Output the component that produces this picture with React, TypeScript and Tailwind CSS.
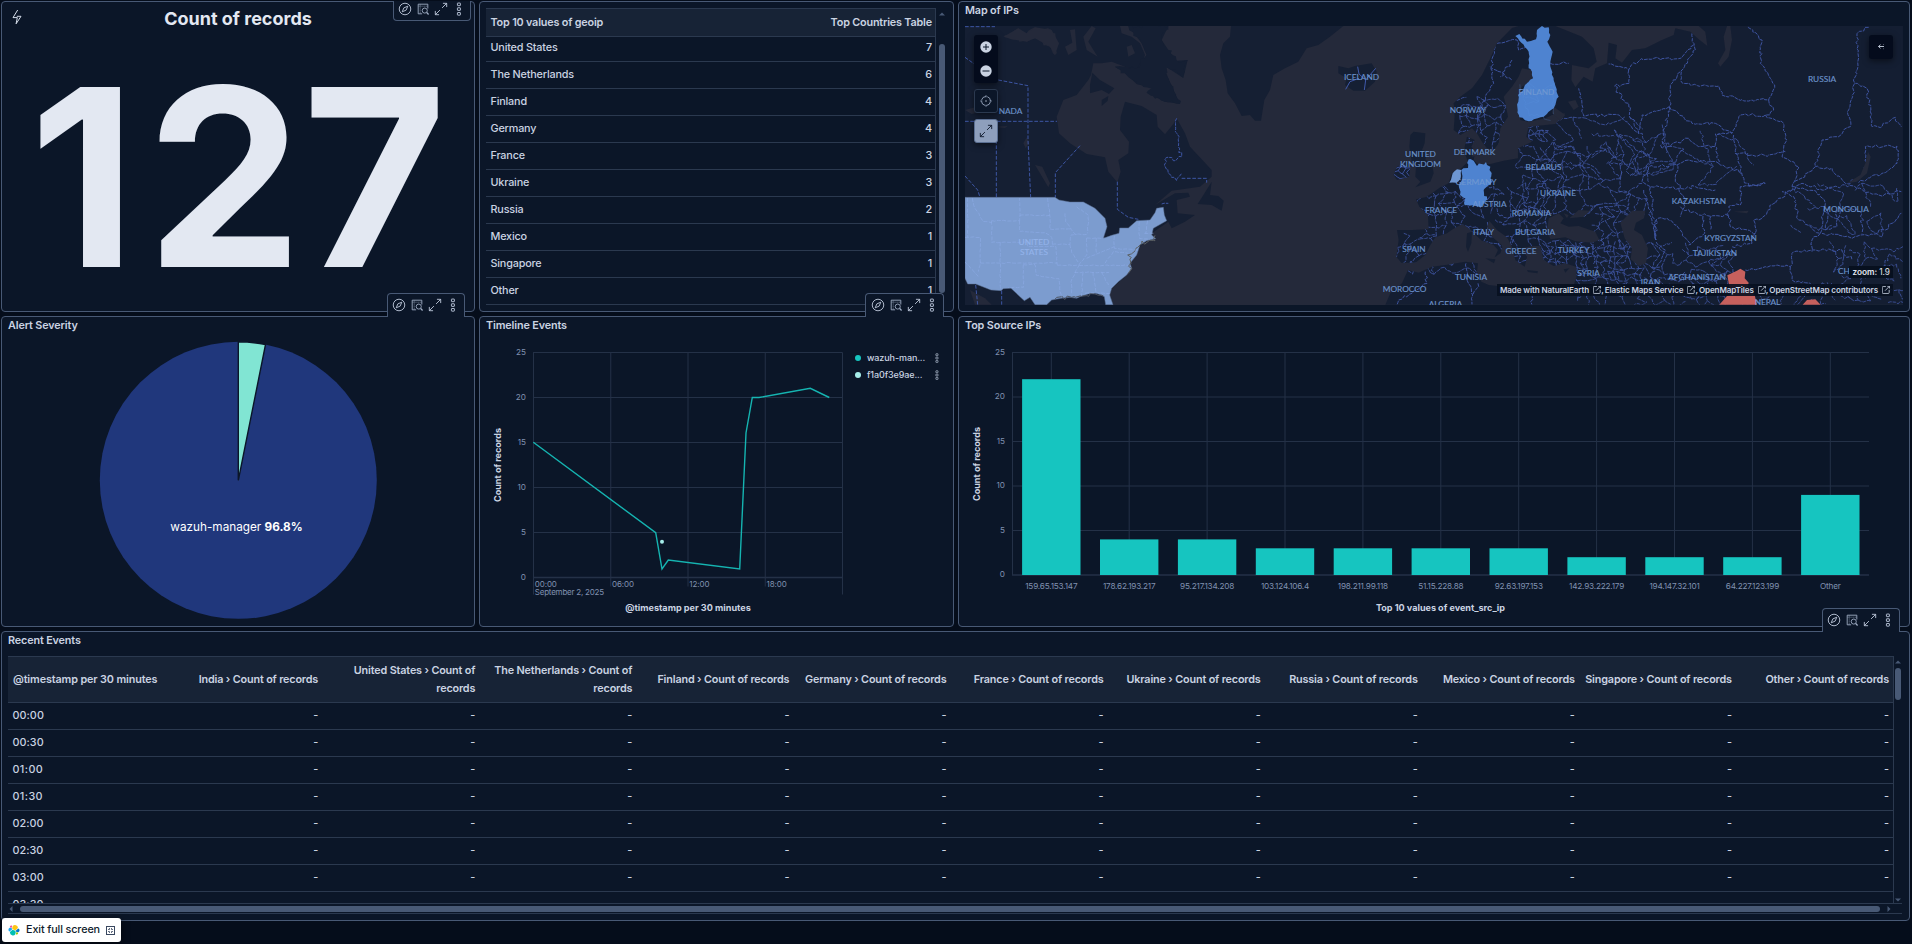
import React from "react";

type Pt = [number, number];

/* ---------- icons ---------- */

const CompassIcon = () => (
  <svg width="14" height="14" viewBox="0 0 16 16" fill="none" stroke="#c3cee0" strokeWidth="1">
    <circle cx="8" cy="8" r="6.6" />
    <path d="M11.2 4.8 9.3 9.3 4.8 11.2 6.7 6.7Z" />
  </svg>
);

const InspectIcon = () => (
  <svg width="14" height="14" viewBox="0 0 16 16" fill="none" stroke="#a3b1c8" strokeWidth="1">
    <path d="M7 13.500H2.500V2.500h11v5" />
    <path d="M4.800 3v10M3 4.800h10" strokeDasharray="1.100 1.100" opacity=".8" />
    <circle cx="10" cy="9.800" r="2.900" />
    <path d="m12.200 12 2.200 2.300" strokeWidth="1.400" />
  </svg>
);

const ExpandIcon = ({ color = "#c3cee0" }: { color?: string }) => (
  <svg width="14" height="14" viewBox="0 0 16 16" fill="none" stroke={color} strokeWidth="1">
    <path d="M10.2 1.5h4.3v4.3M14.5 1.5 9.2 6.8M5.8 14.5H1.5v-4.3M1.5 14.5l5.3-5.3" />
  </svg>
);

const DotsIcon = ({ small = false }: { small?: boolean }) => (
  <svg width={small ? 10 : 14} height={small ? 10 : 14} viewBox="0 0 16 16" fill="none" stroke="#b4c0d4" strokeWidth="1.1">
    <rect x="6.2" y="1.2" width="3.4" height="3" rx=".4" />
    <rect x="6.2" y="6.6" width="3.4" height="3" rx=".4" />
    <rect x="6.2" y="12" width="3.4" height="3" rx=".4" />
  </svg>
);

const BoltIcon = () => (
  <svg width="10" height="16" viewBox="0 0 10 16" fill="none" stroke="#d5ddea" strokeWidth="1">
    <path d="M5.700 1 1 8.600h4.300L4.100 14.800 9 7.300H4.800" strokeLinejoin="round" />
  </svg>
);

const PopoutIcon = () => (
  <svg width="8" height="8" viewBox="1 1 14.500 14.500" fill="none" stroke="#cad3e2" strokeWidth="1.5">
    <path d="M8 2H3a1.5 1.5 0 0 0-1.5 1.5V13A1.500 1.500 0 0 0 3 14.500h9.500A1.500 1.500 0 0 0 14 13V8M10.500 1.500h4v4M14.300 1.700 6.500 9.500" />
  </svg>
);

const ElasticLogo = () => (
  <svg width="12" height="12" viewBox="0 0 32 32">
    <path fill="#FEC514" d="M12.600 13.700 19.600 17l7-6.200a7.900 7.900 0 0 0-14.200-4.900l-1.200 6.100Z" />
    <path fill="#00BFB3" d="m5.300 21.200-.1 1.600a7.900 7.900 0 0 0 14.300 4.500l1.200-6-1.600-3-7-3.200Z" />
    <path fill="#F04E98" d="m5.200 9.100 4.800 1.200 1.100-5.500a3.800 3.800 0 0 0-5.900 4.300Z" />
    <path fill="#1BA9F5" d="M4.800 10.200a5.300 5.300 0 0 0-.2 10l6.800-6.100-1.200-2.700Z" />
    <path fill="#93C90E" d="M20.900 27.200a3.800 3.800 0 0 0 5.900-4.300L22 21.800Z" />
    <path fill="#0077CC" d="m21.800 20.500 5.400 1.300a5.300 5.300 0 0 0 .2-10l-7 6.200Z" />
  </svg>
);

const ExitIcon = () => (
  <svg width="9" height="9" viewBox="0 0 9 9" fill="none" stroke="#3a4860" strokeWidth="1">
    <rect x=".5" y=".5" width="8" height="8" />
    <path d="M2 3.500h1.500V2M7 3.500H5.500V2M2 5.500h1.500V7M7 5.500H5.500V7" strokeWidth=".8" />
  </svg>
);

const Caret = ({ d }: { d: string }) => (
  <svg width="6" height="6" viewBox="0 0 6 6" fill="#485975">
    <path d={d} />
  </svg>
);

/* ---------- panel chrome ---------- */

const Toolbar = ({ className, top = false }: { className: string; top?: boolean }) => (
  <div
    className={`absolute z-10 flex items-center justify-center gap-1 border border-[#485975] bg-[#0b1628] ${
      top ? "h-[20px] rounded-b-[4px] border-t-0 pb-[4px]" : "h-[24px] rounded-t-[4px] border-b-0 pb-px"
    } ${className}`}
  >
    <CompassIcon />
    <InspectIcon />
    <ExpandIcon />
    <DotsIcon />
  </div>
);

const Panel = ({ className, children }: { className: string; children: React.ReactNode }) => (
  <section className={`relative rounded-[4px] border border-[#485975] bg-[#0b1628] ${className}`}>{children}</section>
);

const Title = ({ children }: { children: React.ReactNode }) => (
  <h2 className="h-[24px] pl-[6px] text-[10.8px] leading-[17px] font-semibold tracking-[-0.13px] text-[#cad3e2]">{children}</h2>
);

/* ---------- countries table ---------- */

const countries: [string, number][] = [
  ["United States", 7],
  ["The Netherlands", 6],
  ["Finland", 4],
  ["Germany", 4],
  ["France", 3],
  ["Ukraine", 3],
  ["Russia", 2],
  ["Mexico", 1],
  ["Singapore", 1],
  ["Other", 1],
];

const CountriesTable = () => (
  <div className="flex h-full pt-[6px] pl-[6px]">
    <div className="flex h-[298px] w-[450px] flex-col border-r border-[#2b394f] text-[10.800px] tracking-[-0.17px] text-[#cad3e2]">
      <div className="z-[1] flex h-[29px] shrink-0 items-center justify-between border-y border-[#2b394f] bg-[#172336] pt-[2px] pr-[3px] pl-[4.500px] font-semibold">
        <span>Top 10 values of geoip</span>
        <span>Top Countries Table</span>
      </div>
      <div className="-mt-[2px]">
        {countries.map(([name, n]) => (
          <div key={name} className="flex h-[27px] items-center justify-between border-b border-[#2b394f] pr-[3px] pl-[4.500px] font-medium">
            <span>{name}</span>
            <span>{n}</span>
          </div>
        ))}
      </div>
    </div>
    <div className="flex w-[11px] flex-col items-center pt-[3px]">
      <Caret d="M0 4.500 3 1.500 6 4.500Z" />
      <div className="mt-[27px] h-[249px] w-[6px] rounded-full bg-[#485975]" />
    </div>
  </div>
);

/* ---------- map ---------- */

const makeRng = (seed: number) => () => {
  seed = (seed * 1664525 + 1013904223) % 4294967296;
  return seed / 4294967296;
};

const jag = (pts: Pt[], seed: number, amp = 5): string => {
  const r = makeRng(seed);
  let d = `M${pts[0][0]} ${pts[0][1]}`;
  for (let i = 1; i < pts.length; i++) {
    const [ax, ay] = pts[i - 1];
    const [bx, by] = pts[i];
    const n = Math.max(1, Math.round(Math.hypot(bx - ax, by - ay) / 9));
    for (let k = 1; k <= n; k++) {
      const t = k / n;
      const j = k === n ? 0 : amp;
      d += `L${(ax + (bx - ax) * t + (r() - 0.5) * 2 * j).toFixed(1)} ${(ay + (by - ay) * t + (r() - 0.5) * 2 * j).toFixed(1)}`;
    }
  }
  return d;
};

const mesh = (x0: number, y0: number, x1: number, y1: number, cell: number, seed: number, keep = 0.85): string => {
  const r = makeRng(seed);
  const cols = Math.round((x1 - x0) / cell);
  const rows = Math.round((y1 - y0) / cell);
  const g: Pt[][] = [];
  for (let j = 0; j <= rows; j++) {
    g.push([]);
    for (let i = 0; i <= cols; i++) {
      g[j].push([x0 + (i + (j % 2) * 0.5) * cell + (r() - 0.5) * cell * 0.9, y0 + j * cell + (r() - 0.5) * cell]);
    }
  }
  let d = "";
  for (let j = 0; j <= rows; j++) {
    for (let i = 0; i <= cols; i++) {
      if (i < cols && r() < keep * 0.9) d += jag([g[j][i], g[j][i + 1]], i * 31 + j * 7 + seed, Math.min(5, cell * 0.14));
      if (j < rows && r() < keep) d += jag([g[j][i], g[j + 1][i]], i * 17 + j * 13 + seed, Math.min(5, cell * 0.14));
    }
  }
  return d;
};

const LAND_E =
  "M240 84 195 130 175 175 150 225 120 265 85 290 65 310 68 350 65 390 85 405 120 385 135 400 150 425 165 445 185 450 200 430 205 385 228 350 220 310 215 290 240 260 260 230 270 205 300 210 300 240 270 260 258 290 260 330 265 360 290 365 340 355 360 345 400 340 370 372 290 380 283 410 300 425 258 445 258 475 215 482 175 492 140 495 125 480 130 455 118 440 128 420 105 410 98 440 100 465 108 485 85 507 60 520 50 550 25 562 0 580-20 592-48 598-38 620-12 645-10 688-60 690-105 690-100 720-107 770-92 788-50 788-20 765-5 735 10 712 45 700 62 688 90 672 110 685 125 700 150 722 185 735 198 750 188 772 205 760 212 738 180 710 165 680 172 662 195 690 225 712 240 740 250 780 278 800 285 770 268 745 300 738 325 738 335 780 365 798 400 790 432 800 434 830 420 870 400 885 320 872 270 885 240 875 215 860 170 855 148 845 135 815 138 790 100 785 40 795 0 800-40 818-72 810-90 850-125 880-140 914H1413V78H895L900 120 890 170 865 200 858 190 880 150 875 110 885 78H800L820 95 826 138 800 118 775 95 730 85 725 105 690 120 640 145 600 150 570 188 550 175 555 135 530 128 525 190 490 205 482 245 455 230 430 262 418 240 420 195 470 205 494 185 485 145 450 110 400 90 370 78H260Z";
const ISLES =
  "M-65 405-55 395-20 400-22 430-30 450-15 455-20 480 0 490 5 520-5 545-50 562-35 545-50 530-48 500-60 490-68 440ZM-105 500-75 485-65 500-68 530-105 540-115 525ZM105 700 120 695 118 730 108 755 102 740ZM160 775 190 778 186 790ZM285 810 318 814 316 820 288 816ZM395 808 412 805 400 818Z";
const WATER_E =
  "M345 690 350 655 380 640 395 655 385 670 410 680 440 678 490 695 502 720 480 728 430 724 400 712 355 718ZM412 655 440 630 475 632 455 650ZM565 668 600 632 640 632 636 655 612 668 606 690 630 705 648 745 642 790 620 798 596 778 600 745 578 715ZM408 305 430 300 440 320 425 330ZM365 320 400 345 385 362 360 340ZM1245 550 1285 525 1300 490 1308 455 1316 470 1305 520 1275 545ZM395 640 410 645 405 655ZM905 635 950 632 945 640ZM130 425 150 465 120 470Z";
const LAND_W =
  "M30 78H495L500 100 530 110 555 130 570 165 560 195 540 210 510 200 470 185 440 190 415 190 408 225 400 240 365 285 325 300 305 350 312 400 345 430 395 462 450 472 460 515 487 547 497 515 490 480 520 460 522 425 495 390 497 350 510 305 560 318 605 345 608 380 630 403 655 372 665 355 690 400 705 440 740 478 770 510 770 530 735 560 650 572 600 615 660 580 700 578 705 590 665 600 668 640 720 645 690 665 650 685 640 665 590 700 555 740 520 790 510 830 475 860 460 880 470 914H30Z";
const ISLES_W =
  "M520 78H640L620 120 640 150 665 182 698 180 685 234 640 205 625 195 640 235 675 312 630 305 575 278 595 265 545 252 510 220 480 200 545 205 575 165 560 130ZM412 218 435 240 478 265 462 282 440 270 405 280 405 255ZM770 545 742 590 728 612 770 615 800 632 806 602 790 588 765 585ZM828 78H1165L1125 110 1090 135 1055 145 1030 185 990 205 955 225 945 270 928 300 918 362 900 362 885 345 860 348 840 310 818 280 812 240 800 205 795 165 805 130 825 110ZM1150 198 1180 205 1200 198 1250 190 1265 215 1260 245 1230 272 1195 272 1170 255 1175 235 1150 220ZM440 300 460 288 458 302 440 318Z";
const WATER_W =
  "M145 110 190 85 215 100 240 82 290 90 312 130 300 165 285 140 240 115 215 125 170 118ZM330 140 352 128 345 90 360 88 365 150 340 165ZM385 110 410 78 422 85 400 125 428 170 395 150ZM240 495 262 500 285 550 280 562 255 520ZM30 330 60 322 75 335 50 342ZM515 140 530 135 540 160 520 170ZM205 430 215 412 222 430 212 445ZM120 380 158 378 150 384Z";
const USA =
  "M30 592H300L312 600 345 606 385 606 420 625 450 655 456 680 445 715 470 706 492 700 494 684 520 684 545 662 585 660 600 638 605 625 625 622 628 645 635 662 595 685 590 705 602 716 575 722 555 735 545 765 525 790 530 805 515 825 490 845 470 865 464 885 474 914H452L448 890 425 880 400 882 375 890 365 895 345 892 318 895 290 900 275 914H240L225 892 208 902 195 890 168 865 145 866 138 872 108 870 62 852 38 852 30 835Z";
const FINLAND =
  "M250 108 262 102 285 125 312 118 315 90 330 78 350 82 355 105 346 125 362 155 355 190 365 240 380 290 365 325 335 350 290 364 262 352 256 320 258 285 285 250 303 235 300 215 290 205 290 155 268 128Z";
const GERMANY =
  "M110 478 125 482 135 498 162 486 175 500 180 545 155 570 165 600 150 618 98 616 100 595 84 585 80 555 90 540 88 510 108 504Z";
const NETHERLANDS = "M62 520 75 508 88 510 86 535 74 548 52 548Z";

const toPts = (s: string): Pt[] => {
  const n = s.match(/[\d.]+/g)!.map(Number);
  const out: Pt[] = [];
  for (let i = 0; i < n.length; i += 2) out.push([n[i], n[i + 1]]);
  out.push(out[0]);
  return out;
};

const linesW: Pt[][] = [
  [[130, 240], [219, 257], [219, 420], [227, 592]],
  [[30, 364], [306, 364]],
  [[124, 420], [124, 592]],
  [[375, 437], [301, 518], [301, 592]],
  [[30, 528], [68, 570], [75, 592]],
  [[487, 545], [487, 628], [520, 652], [550, 658]],
  [[680, 535], [755, 535], [755, 548]],
  [[30, 172], [58, 192]],
  [[30, 80], [120, 80]],
  [[62, 855], [68, 914]],
  [[140, 872], [140, 914]],
];
const statesW: Pt[][] = [
  [[52, 594], [60, 625], [85, 665], [110, 668]],
  [[110, 662], [194, 662], [194, 594]],
  [[194, 646], [285, 646]],
  [[278, 594], [285, 650], [285, 688]],
  [[110, 662], [110, 727], [218, 727]],
  [[194, 662], [194, 694], [270, 698], [290, 712], [292, 733]],
  [[30, 712], [76, 712], [76, 789], [70, 815]],
  [[136, 727], [136, 870]],
  [[76, 789], [307, 789]],
  [[218, 727], [218, 740], [303, 740], [307, 795]],
  [[205, 794], [240, 794], [244, 826], [312, 836], [315, 875], [320, 892]],
  [[205, 794], [205, 862], [160, 862]],
  [[285, 687], [350, 687]],
  [[292, 733], [345, 733], [348, 705], [365, 703]],
  [[330, 640], [332, 665], [360, 703], [395, 703]],
  [[307, 796], [372, 796], [348, 845], [350, 880]],
  [[395, 714], [395, 765], [372, 795]],
  [[345, 733], [350, 757], [372, 790]],
  [[424, 714], [424, 762]],
  [[395, 714], [424, 714], [448, 714]],
  [[372, 796], [520, 796]],
  [[358, 817], [462, 817]],
  [[384, 817], [380, 888]],
  [[414, 817], [424, 880]],
  [[440, 817], [462, 860]],
  [[390, 880], [464, 880]],
  [[478, 708], [478, 745], [550, 750]],
  [[395, 775], [430, 760], [478, 740]],
  [[450, 790], [475, 755], [520, 760]],
  [[553, 665], [553, 715], [585, 718]],
  [[568, 700], [595, 700]],
  [[578, 662], [572, 700]],
  [[38, 594], [38, 712]],
  [[30, 785], [70, 830]],
  [[365, 620], [400, 645], [398, 700]],
];
const quebec: Pt[][] = [
  [[665, 355], [662, 385], [672, 410], [670, 440], [680, 470], [655, 482], [636, 472], [628, 495], [640, 520], [665, 542], [680, 520]],
  [[620, 612], [640, 610]],
];
const linesE: Pt[][] = [
  [[780, 100], [790, 150], [745, 215], [715, 255], [712, 320], [690, 420], [690, 445]],
  [[785, 135], [740, 176], [628, 176], [590, 210], [530, 192]],
  [[590, 210], [592, 250], [548, 258], [575, 300], [590, 310], [592, 345]],
  [[748, 215], [752, 250], [860, 258], [870, 285], [930, 298], [1010, 300], [1028, 255], [1015, 235], [985, 190], [990, 120], [948, 78]],
  [[1010, 300], [1025, 330], [1000, 345], [925, 345], [900, 400], [850, 402], [850, 440]],
  [[712, 320], [780, 370], [850, 370], [900, 400]],
  [[712, 320], [630, 345], [620, 400], [570, 355], [560, 345], [455, 348], [440, 265]],
  [[1000, 345], [1055, 370], [1065, 420], [1050, 470], [1100, 500], [1080, 560]],
  [[1310, 82], [1275, 100], [1278, 160], [1268, 250], [1250, 330], [1255, 380], [1220, 410], [1170, 420], [1150, 500], [1085, 548]],
  [[1270, 250], [1305, 265], [1320, 380], [1350, 380], [1390, 352], [1408, 380]],
  [[1150, 500], [1200, 505], [1240, 550], [1275, 540], [1305, 500], [1300, 440], [1395, 438], [1395, 490], [1350, 520], [1280, 548]],
  [[1080, 560], [1150, 572], [1180, 610], [1165, 700], [1100, 660], [1085, 590], [1050, 575]],
  [[1075, 575], [1110, 550], [1170, 570], [1240, 555], [1340, 585], [1408, 575]],
  [[1170, 700], [1260, 715], [1360, 690], [1408, 640]],
  [[635, 570], [660, 660], [672, 720], [655, 560], [740, 565], [790, 560], [850, 570]],
  [[672, 720], [672, 660], [705, 655], [745, 690], [775, 735]],
  [[745, 620], [800, 645], [890, 648], [890, 620], [925, 615], [925, 560], [1000, 550]],
  [[740, 565], [760, 600], [745, 650]],
  [[813, 648], [818, 700], [770, 735]],
  [[836, 650], [836, 690]],
  [[890, 648], [895, 680], [970, 700], [965, 660], [990, 655], [1040, 595], [1080, 570]],
  [[970, 700], [960, 730], [900, 740]],
  [[905, 405], [910, 460], [930, 520], [950, 560], [1000, 550]],
  [[655, 560], [630, 545], [650, 500], [735, 495], [730, 545], [745, 565]],
  [[735, 495], [770, 480], [860, 490], [850, 440], [800, 440], [770, 415], [690, 445]],
  [[910, 460], [960, 465], [1010, 465], [1060, 455]],
  [[860, 490], [930, 520]],
  [[940, 810], [1000, 800], [1075, 800], [1080, 760], [1150, 750], [1230, 750], [1260, 780]],
  [[1075, 800], [1080, 840], [1140, 855], [1200, 850]],
  [[1165, 700], [1140, 720], [1140, 755]],
  [[655, 830], [680, 790], [700, 750], [672, 725]],
  [[102, 790], [105, 840], [122, 885], [120, 914]],
  [[138, 850], [140, 860], [122, 885]],
  [[-20, 815], [-15, 850], [-60, 880], [-100, 900], [-105, 914]],
  [[300, 870], [300, 914]],
  [[195, 130], [255, 120], [260, 150], [285, 130]],
  [[175, 200], [240, 240]],
  [[190, 140], [178, 200], [185, 250], [160, 290], [140, 340], [145, 400]],
  [[355, 190], [410, 190]],
  [[240, 180], [205, 230]],
  [[1190, 620], [1180, 690], [1215, 680], [1210, 640], [1245, 620], [1290, 640], [1290, 700]],
];

const mapLabels: [string, number, number][] = [
  ["ICELAND", 1361.5, 77],
  ["UNITED", 1420.500, 154],
  ["KINGDOM", 1420.500, 164],
  ["NORWAY", 1468, 110.500],
  ["FINLAND", 1536.500, 92.500],
  ["RUSSIA", 1822, 79.500],
  ["DENMARK", 1474.500, 152],
  ["BELARUS", 1543.500, 167.500],
  ["GERMANY", 1476, 182.500],
  ["UKRAINE", 1558, 193],
  ["AUSTRIA", 1489.500, 204],
  ["FRANCE", 1441, 210],
  ["ROMANIA", 1531.500, 213.500],
  ["ITALY", 1483.500, 232],
  ["BULGARIA", 1535, 232],
  ["SPAIN", 1414, 249.500],
  ["GREECE", 1521, 251],
  ["TURKEY", 1573.500, 250],
  ["TUNISIA", 1471, 277],
  ["SYRIA", 1588.500, 273.500],
  ["MOROCCO", 1404.500, 289.500],
  ["ALGERIA", 1445.500, 304],
  ["KAZAKHSTAN", 1699, 201.500],
  ["KYRGYZSTAN", 1730.500, 238.500],
  ["TAJIKISTAN", 1715, 253.500],
  ["AFGHANISTAN", 1697, 277.500],
  ["IRAN", 1650.500, 282.500],
  ["NEPAL", 1767.500, 302],
  ["MONGOLIA", 1846, 209],
  ["CHI", 1845, 271.500],
  ["NADA", 1010.500, 111.500],
];

const WorldMap = () => (
  <svg width="938" height="279" viewBox="965 26 938 279" className="block">
    <defs>
      <clipPath id="landE">
        <path d={LAND_E} />
      </clipPath>
      <clipPath id="isles">
        <path d={ISLES} />
      </clipPath>
    </defs>
    <rect x="965" y="26" width="938" height="279" fill="#24293a" />
    <g transform="translate(955 0) scale(.33333)" fill="none">
      <path d={LAND_W} fill="#151f33" />
      <path d={jag(toPts(WATER_W.split("Z")[0]), 3, 6)} fill="#24293a" />
      <path d={WATER_W} fill="#24293a" />
      <path d={ISLES_W} fill="#151f33" />
      <path d={jag(toPts(ISLES_W.split("Z")[0].replace("78H640L", "78 640 78 ")), 8, 7)} fill="#151f33" />
      <path d="M30 852 62 858 130 875 168 872 205 905 205 914H30Z" fill="#151f33" />
      <path d="M45 870 90 895 110 914H60Z" fill="#24293a" />
      <g stroke="#4059ac" strokeWidth="2.800" strokeDasharray="11 5">
        {linesW.map((l, i) => (
          <path key={i} d={"M" + l.join("L")} />
        ))}
      </g>
      <g stroke="#4059ac" strokeWidth="2.800">
        {quebec.map((l, i) => (
          <path key={i} d={jag(l, 11 + i, 5)} strokeDasharray="10 3" />
        ))}
        <path d="M1208 200 1212 222 1232 240 1262 205M1232 240 1228 270M1212 235 1185 245 1172 268" strokeWidth="3" />
      </g>
      <path d={USA} fill="#7c9ccf" stroke="#5b6f92" strokeWidth="1.500" />
      <path d={jag([[600, 706], [600, 722], [560, 730], [540, 750], [518, 765], [528, 790], [520, 820]], 5, 8)} stroke="#5b6063" strokeWidth="3" />
      <path d={jag([[300, 898], [350, 892], [375, 888], [420, 882], [445, 888]], 9, 6)} stroke="#4b5361" strokeWidth="3" />
      <g stroke="#8faeea" strokeWidth="2" strokeDasharray="12 4" opacity=".85">
        {statesW.map((l, i) => (
          <path key={i} d={jag(l, 40 + i, 1.500)} />
        ))}
      </g>
    </g>
    <g transform="translate(1432 0) scale(.33333)" fill="none">
      <path d={LAND_E} fill="#151f33" />
      <path d={ISLES} fill="#151f33" />
      <g clipPath="url(#landE)" stroke="#4760b8" strokeWidth="2.500" strokeDasharray="11 3" opacity=".85">
        <path d={mesh(260, 430, 640, 640, 34, 3, 0.8)} />
        <path d={mesh(340, 370, 700, 480, 44, 18, 0.7)} />
        <path d={mesh(560, 420, 920, 560, 60, 8, 0.6)} />
        <path d={mesh(-110, 560, 330, 800, 28, 21, 0.74)} />
        <path d={mesh(80, 300, 215, 440, 25, 14, 0.75)} />
        <path d={mesh(335, 725, 620, 830, 16, 5, 0.78)} />
        <path d={mesh(480, 620, 570, 740, 24, 52, 0.78)} />
        <path d={mesh(430, 830, 880, 914, 28, 77, 0.75)} />
        <path d={mesh(640, 740, 900, 850, 26, 91, 0.65)} />
        <path d={mesh(1090, 570, 1400, 690, 42, 34, 0.6)} />
        <path d={mesh(1200, 740, 1413, 914, 32, 19, 0.62)} />
        <path d={mesh(940, 860, 1200, 914, 28, 23, 0.6)} />
        <path d={mesh(285, 380, 340, 420, 13, 2, 0.8)} />
        {linesE.map((l, i) => (
          <path key={i} d={jag(l, 100 + i, 5)} strokeWidth="2.900" />
        ))}
      </g>
      <g clipPath="url(#isles)" stroke="#4760b8" strokeWidth="2.400">
        <path d={mesh(-118, 485, -65, 540, 16, 4)} />
      </g>
      <path d={WATER_E} fill="#24293a" />
      <path d={jag(toPts(FINLAND), 7, 3)} fill="#4e83d0" />
      <path d={jag(toPts(GERMANY), 9, 4)} fill="#4e83d0" />
      <path d={jag(toPts(NETHERLANDS), 2, 2)} fill="#6d96d3" />
      <path
        d="M915 812 925 806 940 815 938 835 950 848 945 868 968 885 975 914H862L885 888 905 880 892 860 886 826ZM1112 914 1125 900 1150 898 1166 914Z"
        fill="#c6605d"
      />
      <path d={mesh(270, 260, 355, 350, 30, 66, 0.6)} stroke="#5b92e2" strokeWidth="2" opacity=".35" />
    </g>
    <g
      fill="#7199d2"
      stroke="#7199d2"
      strokeWidth=".15"
      fontSize="8.300"
      fontFamily="Lato, sans-serif"
      textAnchor="middle"
      opacity=".95"
    >
      {mapLabels.map(([t, x, y]) => (
        <text key={t} x={x} y={y + 2.800}>
          {t}
        </text>
      ))}
    </g>
    <g fill="#93b3ea" stroke="#93b3ea" strokeWidth=".15" fontSize="8.300" fontFamily="Lato, sans-serif" textAnchor="middle">
      <text x="1034" y="245">UNITED</text>
      <text x="1034" y="255">STATES</text>
    </g>
  </svg>
);

const credits = ["Made with NaturalEarth", "Elastic Maps Service", "OpenMapTiles", "OpenStreetMap contributors"];

const MapPanel = () => (
  <div className="relative mx-[6px] h-[279px] w-[938px] overflow-hidden">
    <WorldMap />
    <div className="absolute top-[9px] left-[9px] flex flex-col gap-[6px]">
      <div className="flex h-[48px] w-[24px] flex-col items-center justify-around rounded-[3px] bg-[#040b1c] shadow-[0_2px_6px_rgba(0,0,0,0.5)]">
        <svg width="12" height="12" viewBox="0 0 12 12">
          <circle cx="6" cy="6" r="5.700" fill="#cad3e2" />
          <path d="M6 3v6M3 6h6" stroke="#0b1628" />
        </svg>
        <svg width="12" height="12" viewBox="0 0 12 12">
          <circle cx="6" cy="6" r="5.700" fill="#cad3e2" />
          <path d="M2.500 6h7" stroke="#0b1628" />
        </svg>
      </div>
      <div className="flex size-[24px] items-center justify-center rounded-[3px] border border-[#2b394f] bg-[#0b1628] shadow-[0_2px_6px_rgba(0,0,0,0.5)]">
        <svg width="12" height="12" viewBox="0 0 12 12" fill="none" stroke="#9aa8c0" strokeWidth=".9">
          <circle cx="6" cy="6" r="4.500" strokeDasharray="5.500 1.570" strokeDashoffset="-0.800" />
          <path d="M6 .3v2M6 9.700v2M.3 6h2M9.700 6h2" />
          <circle cx="6" cy="6" r=".7" fill="#cad3e2" stroke="none" />
        </svg>
      </div>
      <div className="flex size-[24px] items-center justify-center rounded-[3px] border border-[#5b6f92] bg-[#8e9fbc] shadow-[0_2px_6px_rgba(0,0,0,0.5)]">
        <ExpandIcon color="#0b1628" />
      </div>
    </div>
    <div className="absolute top-[9px] right-[10px] flex size-[24px] items-center justify-center rounded-[3px] bg-[#040b1c] shadow-[0_2px_6px_rgba(0,0,0,0.5)]">
      <svg width="8" height="8" viewBox="0 0 8 8" fill="none" stroke="#cad3e2" strokeWidth=".9">
        <path d="M1.500 3.500H7M3.500 1.700 1.500 3.500l2 1.800" />
        <path d="M6.500 1v.8M6.500 5.400v.8" opacity=".5" />
      </svg>
    </div>
    <div className="absolute right-[10px] bottom-[27px] flex h-[12px] items-center bg-[#07101f] px-[3px] text-[8.300px] text-[#e3e8f2]">
      <b className="pr-[2px] font-semibold">zoom:</b> 1.9
    </div>
    <div className="absolute right-[10px] bottom-[9px] flex h-[12px] w-[396px] items-center justify-between bg-[#07101f]/90 px-[3px] text-[8.100px] font-semibold tracking-[-0.130px] whitespace-nowrap text-[#cad3e2]">
      {credits.map((c, i) => (
        <span key={c} className="flex items-center gap-1">
          {c}
          <span className="flex items-center">
            <PopoutIcon />
            {i < 3 && ","}
          </span>
        </span>
      ))}
    </div>
  </div>
);

/* ---------- charts ---------- */

const PIE = { cx: 238.300, cy: 480.300, r: 138.500 };
const Pie = () => {
  const a = 0.0315 * 2 * Math.PI;
  const ex = PIE.cx + PIE.r * Math.sin(a);
  const ey = PIE.cy - PIE.r * Math.cos(a);
  return (
    <svg width="472" height="284" viewBox="2 341 472 284" className="block">
      <circle cx={PIE.cx} cy={PIE.cy} r={PIE.r} fill="#20377c" />
      <path
        d={`M${PIE.cx} ${PIE.cy}V${PIE.cy - PIE.r}A${PIE.r} ${PIE.r} 0 0 1 ${ex} ${ey}Z`}
        fill="#81e5d3"
        stroke="#0b1628"
        strokeWidth="1.400"
      />
      <text x="236.500" y="531" textAnchor="middle" fontSize="11.750" fill="#fff">
        wazuh-manager <tspan fontWeight="700">96.8%</tspan>
      </text>
    </svg>
  );
};

const ticks = [0, 5, 10, 15, 20, 25];
const GRID = "#243147";

const Timeline = () => (
  <svg width="473" height="284" viewBox="480 341 473 284" className="block">
    {ticks.map((t) => (
      <g key={t}>
        <path d={`M533 ${577.500 - t * 9}H842.500`} stroke={GRID} strokeWidth={t ? 1 : 1.500} />
        <text x="526" y={580 - t * 9} textAnchor="end" fontSize="8.200" fill="#8091b0">
          {t}
        </text>
      </g>
    ))}
    {["00:00", "06:00", "12:00", "18:00"].map((t, i) => (
      <g key={t}>
        <path d={`M${533.500 + i * 77.250} 352.500V${i ? 586.500 : 594.500}`} stroke={GRID} />
        <text x={534.800 + i * 77.250} y="587" fontSize="8" letterSpacing="-.1" fill="#8091b0">
          {t}
        </text>
      </g>
    ))}
    <path d="M842.500 352.500V594.500" stroke={GRID} />
    <text x="534.800" y="595" fontSize="8" letterSpacing="-.22" fill="#8091b0">
      September 2, 2025
    </text>
    <path
      d="M533.300 442.300 655.700 532.700 662 569 668.300 560 739.700 569 746 433 752.300 397.500H759L810.300 388.300 829.300 397.500"
      fill="none"
      stroke="#16c5c0"
      strokeWidth="1.400"
      opacity=".9"
    />
    <circle cx="662" cy="541.800" r="2" fill="#a6edea" />
    <text x="688" y="611" textAnchor="middle" fontSize="9.100" fontWeight="700" fill="#cad3e2">
      @timestamp per 30 minutes
    </text>
    <text transform="translate(501 465) rotate(-90)" textAnchor="middle" fontSize="9" fontWeight="700" fill="#cad3e2">
      Count of records
    </text>
  </svg>
);

const LegendItem = ({ dot, label }: { dot: string; label: string }) => (
  <div className="flex h-[17px] items-center">
    <span className={`size-[6px] rounded-full ${dot}`} />
    <span className="ml-[6px] flex-1 text-[9px] font-medium tracking-[-0.1px] text-[#cad3e2]">{label}</span>
    <DotsIcon small />
  </div>
);

const ips: [string, number][] = [
  ["159.65.153.147", 22],
  ["178.62.193.217", 4],
  ["95.217.134.208", 4],
  ["103.124.106.4", 3],
  ["198.211.99.118", 3],
  ["51.15.228.88", 3],
  ["92.63.197.153", 3],
  ["142.93.222.179", 2],
  ["194.147.32.101", 2],
  ["64.227.123.199", 2],
  ["Other", 9],
];

const SourceIps = () => (
  <svg width="950" height="284" viewBox="959 341 950 284" className="block">
    {ticks.map((t) => (
      <g key={t}>
        <path d={`M1012 ${575 - t * 8.900}H1869`} stroke={GRID} strokeWidth={t ? 1 : 1.500} />
        <text x="1005" y={577 - t * 8.900} textAnchor="end" fontSize="8.200" fill="#8091b0">
          {t}
        </text>
      </g>
    ))}
    <path d="M1012.500 352V575" stroke={GRID} />
    {ips.map(([ip, n], i) => {
      const x = 1051.300 + i * 77.900;
      return (
        <g key={ip}>
          <path d={`M${x} 352.500V575`} stroke={GRID} />
          <rect x={x - 29.200} y={575 - n * 8.900} width="58.400" height={n * 8.900} fill="#16c5c0" />
          <text x={x} y="589" textAnchor="middle" fontSize="8.200" letterSpacing="-.2" fill="#8091b0">
            {ip}
          </text>
        </g>
      );
    })}
    <text x="1440.500" y="611" textAnchor="middle" fontSize="9.050" fontWeight="700" fill="#cad3e2">
      Top 10 values of event_src_ip
    </text>
    <text transform="translate(980 464) rotate(-90)" textAnchor="middle" fontSize="9" fontWeight="700" fill="#cad3e2">
      Count of records
    </text>
  </svg>
);

/* ---------- events table ---------- */

const places = [
  "India",
  "United States",
  "The Netherlands",
  "Finland",
  "Germany",
  "France",
  "Ukraine",
  "Russia",
  "Mexico",
  "Singapore",
  "Other",
];
const times = ["00:00", "00:30", "01:00", "01:30", "02:00", "02:30", "03:00", "03:30"];

const EventsTable = () => (
  <div className="ml-[6px] flex">
    <div className="w-[1886px] text-[10.800px] text-[#cad3e2]">
      <div className="h-[247px] overflow-hidden border-r border-[#2b394f]">
        <div className="grid h-[47px] grid-cols-12 items-center border-y border-[#2b394f] bg-[#172336] leading-[18px] font-semibold tracking-[-0.15px]">
          <div className="pl-[5px] tracking-[-0.12px]">@timestamp per 30 minutes</div>
          {places.map((p) => (
            <div key={p} className="pr-[4px] text-right">
              {p} › Count of records
            </div>
          ))}
        </div>
        {times.map((t) => (
          <div key={t} className="grid h-[27px] grid-cols-12 items-center border-b border-[#2b394f] font-medium">
            <div className={`pl-[4.500px] ${t.includes("1") ? "tracking-[0.4px]" : "tracking-[0.05px]"}`}>{t}</div>
            {places.map((p) => (
              <div key={p} className="pr-[4px] text-right">
                -
              </div>
            ))}
          </div>
        ))}
      </div>
      <div className="flex h-[11px] w-[1894px] items-center border-y border-[#2b394f]">
        <Caret d="M4.500 0 1.500 3 4.500 6Z" />
        <div className="mx-[6px] h-[6px] w-[1860px] rounded-full bg-[#485975]" />
        <Caret d="M1.500 0 4.500 3 1.500 6Z" />
      </div>
    </div>
    <div className="flex h-[247px] w-[8px] flex-col items-center pt-[3px]">
      <Caret d="M0 4.500 3 1.500 6 4.500Z" />
      <div className="mt-[3px] h-[32px] w-[6px] rounded-full bg-[#485975]" />
      <div className="mt-auto">
        <Caret d="M0 1.500 3 4.500 6 1.500Z" />
      </div>
    </div>
  </div>
);

/* ---------- page ---------- */

export default function App() {
  return (
    <main className="relative h-[944px] w-[1912px] overflow-hidden bg-[#050d1b] p-px font-['Inter',sans-serif]">
      <div className="flex flex-col gap-1">
        <div className="flex h-[311px] gap-1">
          <Panel className="w-[474px]">
            <div className="absolute top-[7px] left-[10px]">
              <BoltIcon />
            </div>
            <h2 className="pt-[4px] text-center text-[18px] leading-[26px] font-bold text-[#e3e8f2]">Count of records</h2>
            <div className="pt-[20px] text-center text-[248px] leading-[250px] font-bold text-[#e3e8f2]">
              <span className="tracking-[10px]">1</span>27
            </div>
            <Toolbar top className="-top-[1px] right-[3px] w-[78px]" />
          </Panel>
          <Panel className="w-[475px]">
            <CountriesTable />
          </Panel>
          <Panel className="w-[952px]">
            <Title>Map of IPs</Title>
            <MapPanel />
          </Panel>
        </div>
        <div className="flex h-[311px] gap-1">
          <Panel className="w-[474px]">
            <Title>Alert Severity</Title>
            <Pie />
            <Toolbar className="-top-[24px] right-[9px] w-[78px]" />
          </Panel>
          <Panel className="w-[475px]">
            <Title>Timeline Events</Title>
            <Timeline />
            <div className="absolute top-[32px] right-[11px] w-[87px]">
              <LegendItem dot="bg-[#16c5c0]" label="wazuh-man..." />
              <LegendItem dot="bg-[#a6edea]" label="f1a0f3e9ae..." />
            </div>
            <Toolbar className="-top-[24px] right-[9px] w-[79px]" />
          </Panel>
          <Panel className="w-[952px]">
            <Title>Top Source IPs</Title>
            <SourceIps />
          </Panel>
        </div>
        <Panel className="h-[290px] w-[1909px]">
          <Title>Recent Events</Title>
          <EventsTable />
          <Toolbar className="-top-[24px] right-[9px] w-[78px]" />
        </Panel>
      </div>
      <button className="absolute bottom-[2px] left-[2px] z-20 flex h-[24px] w-[119px] items-center rounded-[3px] bg-white pl-[6px] text-[10.800px] font-medium tracking-[-0.12px] whitespace-nowrap text-[#111c2c] shadow-[0_2px_8px_rgba(0,0,0,0.6)]">
        <ElasticLogo />
        <span className="mr-[6px] ml-[6px] pt-px">Exit full screen</span>
        <ExitIcon />
      </button>
    </main>
  );
}
